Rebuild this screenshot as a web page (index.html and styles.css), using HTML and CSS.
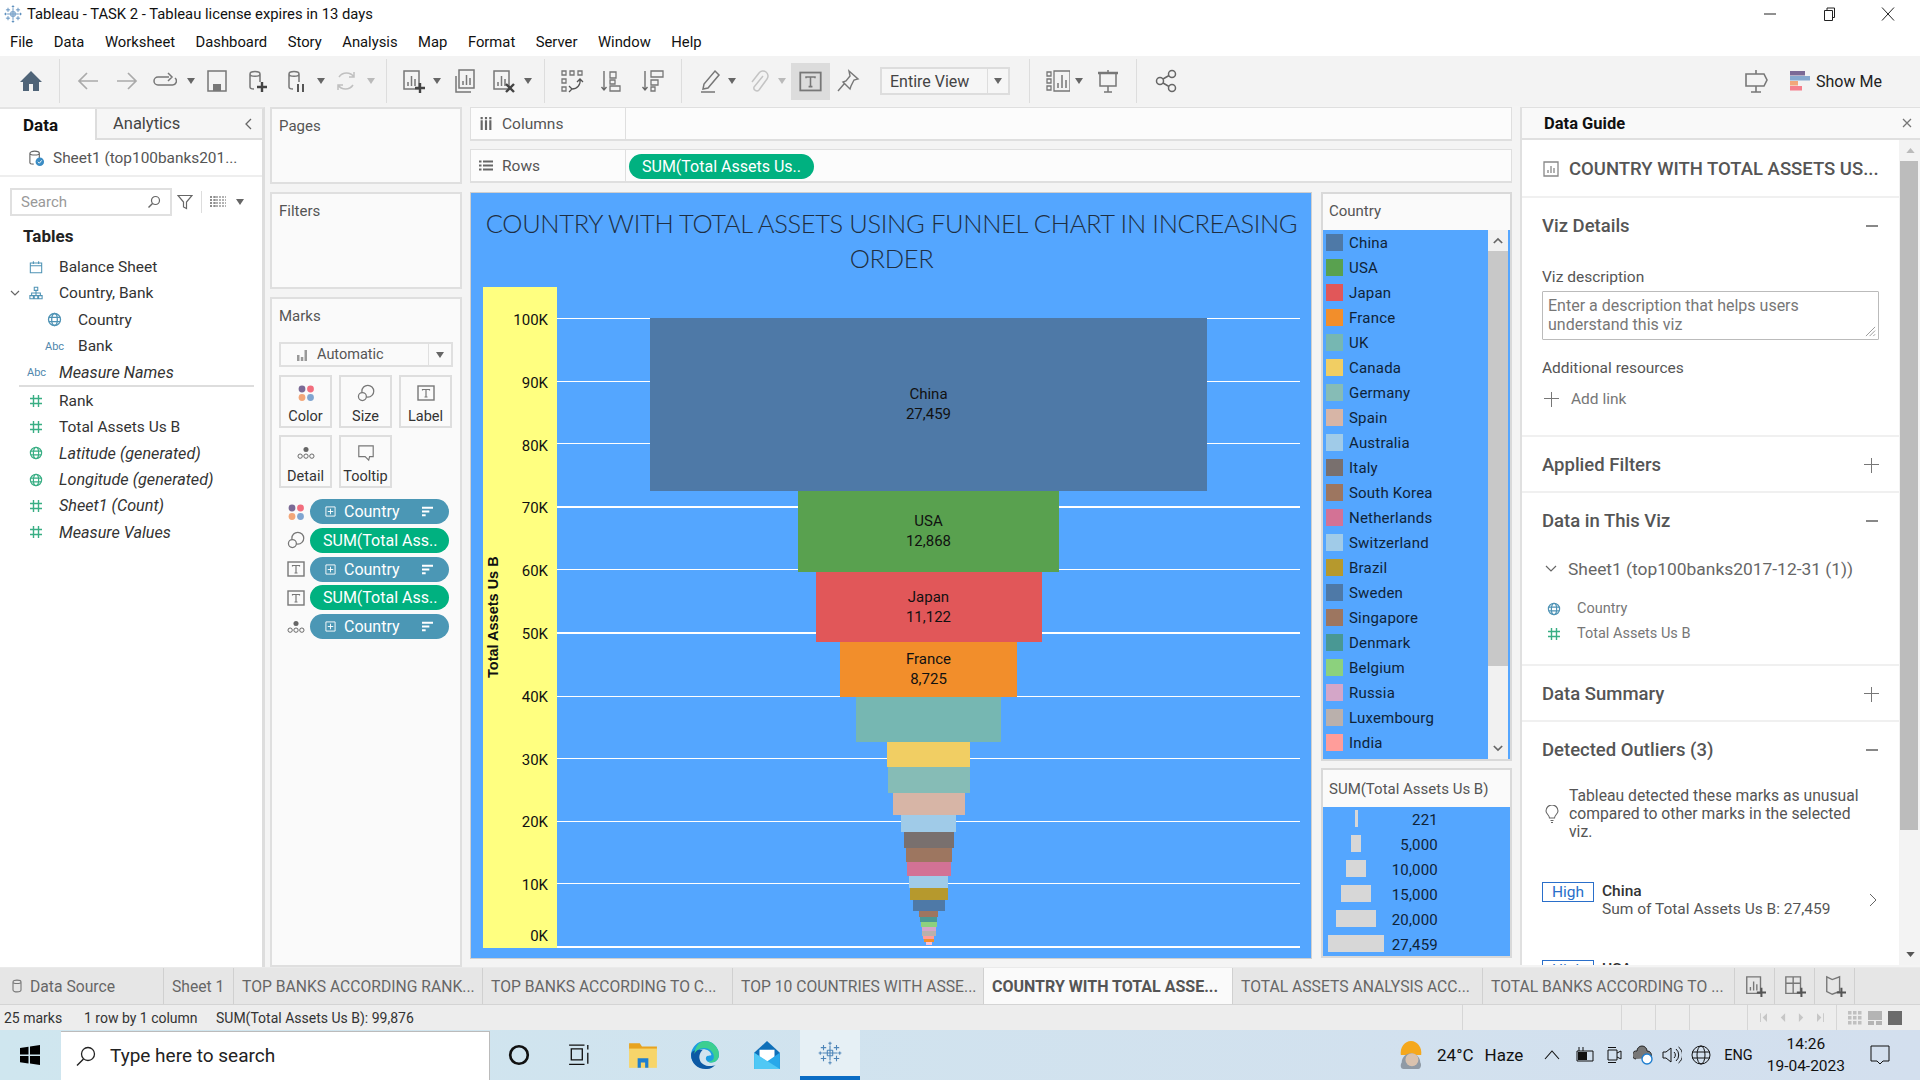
FILE: index.html
```html
<!DOCTYPE html>
<html lang="en">
<head>
  <meta charset="UTF-8">
  <title>Tableau - TASK 2</title>
  <link rel="stylesheet" href="styles.css">
</head>
<body>
  <svg class="defs">
    <symbol id="i-hash" viewBox="0 0 14 14"><path d="M4.5 1v12M9.5 1v12M1 4.5h12M1 9.5h12" fill="none" stroke="currentColor" stroke-width="1.4"/></symbol>
    <symbol id="i-globe" viewBox="0 0 16 16"><g fill="none" stroke="currentColor" stroke-width="1.4"><circle cx="8" cy="8" r="6.4"/><ellipse cx="8" cy="8" rx="3" ry="6.4"/><path d="M2 5.8h12M2 10.2h12"/></g></symbol>
    <symbol id="i-dots" viewBox="0 0 18 18"><circle cx="5" cy="5" r="3.4" fill="#7b6a96"/><circle cx="13.5" cy="5" r="3.4" fill="#f26d7d"/><circle cx="5" cy="13.5" r="3.4" fill="#f2a679"/><circle cx="13.5" cy="13.5" r="3.4" fill="#7fa5d1"/></symbol>
    <symbol id="i-size" viewBox="0 0 20 20"><g fill="none" stroke="#777" stroke-width="1.4"><circle cx="12" cy="8" r="6.6"/><circle cx="6" cy="14" r="4.4" fill="#fafafa"/></g></symbol>
    <symbol id="i-tbox" viewBox="0 0 18 18"><rect x="1" y="2" width="16" height="14" fill="none" stroke="#777" stroke-width="1.4"/><path d="M5.5 6.5v-1h7v1M9 5.5v7.5M7.5 13h3" fill="none" stroke="#777" stroke-width="1.2"/></symbol>
    <symbol id="i-detail" viewBox="0 0 20 16"><circle cx="10" cy="4" r="2.8" fill="#666"/><g fill="none" stroke="#666" stroke-width="1.1"><circle cx="3.5" cy="11.5" r="2.4"/><circle cx="10" cy="11.5" r="2.4"/><circle cx="16.5" cy="11.5" r="2.4"/></g></symbol>
    <symbol id="i-sort" viewBox="0 0 14 12"><path d="M1 2h12M1 6h8M1 10h4" stroke="#fff" stroke-width="2.2" fill="none"/></symbol>
    <symbol id="i-plusbox" viewBox="0 0 12 12"><path d="M1 1h10v10H1zM6 3v6M3 6h6" fill="none" stroke="#fff" stroke-width="1"/></symbol>
    <symbol id="i-caret" viewBox="0 0 8 6"><path d="M0 0h8L4 6z" fill="#666"/></symbol>
    <symbol id="i-cyl" viewBox="0 0 24 24"><g fill="none" stroke="#777" stroke-width="1.5"><path d="M6 5c0-3.2 10-3.2 10 0v8M6 5c0 3 10 3 10 0M6 5v13c0 1 1 2 4 2"/></g></symbol>
    <symbol id="i-sheet" viewBox="0 0 24 24"><g fill="none" stroke="#777" stroke-width="1.5"><path d="M3 2h15v18H3z"/><path d="M7 17v-4M10.500 17V7M14 17v-7"/></g></symbol>
    <symbol id="i-tableau" viewBox="0 0 24 24"><path d="M12 5v14M5 12h14M9.500 9.500h5M9.500 14.500h5M9.500 9.500v5M14.500 9.500v5M6 4.500v5M3.500 7h5M18 4.500v5M15.500 7h5M6 14.500v5M3.500 17h5M18 14.500v5M15.500 17h5M12 1.500v3M10.500 3h3M12 19.500v3M10.500 21h3M3 10.500v3M1.500 12h3M21 10.500v3M19.500 12h3" fill="none" stroke="#4f86b8" stroke-width="1"/></symbol>
  </svg>

  <header class="titlebar">
    <svg class="app-logo"><use href="#i-tableau"/></svg>
    <span class="title-text">Tableau - TASK 2 - Tableau license expires in 13 days</span>
    <div class="win-btns">
      <svg viewBox="0 0 14 14"><path d="M1 7h12" stroke="#222"/></svg>
      <svg viewBox="0 0 14 14"><path d="M2.500 3.500h8v10h-8zM5 3.500V1h7.500v9.500h-2" fill="none" stroke="#222"/></svg>
      <svg viewBox="0 0 14 14"><path d="M1 .5l12 13M13 .5l-12 13" stroke="#222" fill="none"/></svg>
    </div>
  </header>

  <nav class="menubar">
    <span>File</span><span>Data</span><span>Worksheet</span><span>Dashboard</span><span>Story</span><span>Analysis</span><span>Map</span><span>Format</span><span>Server</span><span>Window</span><span>Help</span>
  </nav>

  <div class="toolbar">
    <svg class="ico" viewBox="0 0 24 24"><path d="M12 2L23 13h-3v9h-6v-7h-4v7H4v-9H1z" fill="#4f6478"/></svg>
    <i class="tb-sep"></i>
    <svg class="ico" viewBox="0 0 24 24"><path d="M22 12H3M11 4l-8 8 8 8" fill="none" stroke="#aaa" stroke-width="1.7"/></svg>
    <svg class="ico" viewBox="0 0 24 24"><path d="M2 12h19M13 4l8 8-8 8" fill="none" stroke="#aaa" stroke-width="1.7"/></svg>
    <svg class="ico" viewBox="0 0 24 24"><path d="M16 8H5a4 4 0 0 0 0 8h14a4 4 0 0 0 3-7M15 4l4 4-4 4" fill="none" stroke="#777" stroke-width="1.5"/></svg>
    <svg class="car"><use href="#i-caret"/></svg>
    <svg class="ico" viewBox="0 0 24 24"><path d="M3 2h18v20H3z" fill="none" stroke="#777" stroke-width="1.5"/><path d="M8 22v-7h8v7z" fill="#777"/></svg>
    <svg class="ico" viewBox="0 0 24 24"><use href="#i-cyl"/><path d="M18 13v10M13 18h10" stroke="#444" stroke-width="2.4"/></svg>
    <svg class="ico" viewBox="0 0 24 24"><use href="#i-cyl"/><path d="M15 15v8M20 15v8" stroke="#555" stroke-width="2"/></svg>
    <svg class="car"><use href="#i-caret"/></svg>
    <svg class="ico" viewBox="0 0 24 24"><path d="M5 8a9 9 0 0 1 15 0M19 16a9 9 0 0 1-15 0M20 3v5h-5M4 21v-5h5" fill="none" stroke="#c0c0c0" stroke-width="1.5"/></svg>
    <svg class="car light"><use href="#i-caret"/></svg>
    <i class="tb-sep"></i>
    <svg class="ico" viewBox="0 0 24 24"><use href="#i-sheet"/><path d="M19 14v10M14 19h10" stroke="#444" stroke-width="2.4"/></svg>
    <svg class="car"><use href="#i-caret"/></svg>
    <svg class="ico" viewBox="0 0 24 24"><use href="#i-sheet" x="3" y="-1"/><path d="M3 7v16h15" fill="none" stroke="#777" stroke-width="1.500"/></svg>
    <svg class="ico" viewBox="0 0 24 24"><use href="#i-sheet"/><path d="M15 15l8 8M23 15l-8 8" stroke="#444" stroke-width="2.400"/></svg>
    <svg class="car"><use href="#i-caret"/></svg>
    <i class="tb-sep"></i>
    <svg class="ico" viewBox="0 0 24 24"><path d="M2 2h4v4H2zM10 2h4v4h-4zM18 2h4v4h-4zM2 10h4v4H2zM2 18h4v4H2z" fill="none" stroke="#777" stroke-width="1.300"/><path d="M20 10c1 6-3 10-8 10M9 17l3 3-3 3M17 13l3-3 3 3" fill="none" stroke="#555" stroke-width="1.300"/></svg>
    <svg class="ico" viewBox="0 0 24 24"><path d="M4 2v19M1.500 18l2.500 3 2.500-3" fill="none" stroke="#666" stroke-width="1.300"/><path d="M10 3h6v6h-6zM10 11h5v4h-5zM10 17h10v5H10z" fill="none" stroke="#777" stroke-width="1.300"/></svg>
    <svg class="ico" viewBox="0 0 24 24"><path d="M4 2v19M1.500 18l2.500 3 2.500-3" fill="none" stroke="#666" stroke-width="1.300"/><path d="M10 2h12v6H10zM10 11h7v5h-7zM10 18h4v4h-4z" fill="none" stroke="#777" stroke-width="1.300"/></svg>
    <i class="tb-sep"></i>
    <svg class="ico" viewBox="0 0 24 24"><path d="M17 2l4 4-11 13-5 1 1-5zM3 23h14" fill="none" stroke="#777" stroke-width="1.500"/></svg>
    <svg class="car"><use href="#i-caret"/></svg>
    <svg class="ico" viewBox="0 0 24 24"><path d="M17 7l-9 11a3 3 0 0 0 5 3l8-11a5 5 0 0 0-8-6l-7 9" fill="none" stroke="#c4c4c4" stroke-width="1.500"/></svg>
    <svg class="car light"><use href="#i-caret"/></svg>
    <div class="tb-active"><svg class="ico" viewBox="0 0 18 18"><use href="#i-tbox"/></svg></div>
    <svg class="ico" viewBox="0 0 24 24"><path d="M13 2l9 8-4 1-3 6-1 3-7-7 3-1 4-5zM8 15l-6 7" fill="none" stroke="#777" stroke-width="1.400"/></svg>
    <div class="combo"><span>Entire View</span><b><svg class="car"><use href="#i-caret"/></svg></b></div>
    <i class="tb-sep"></i>
    <svg class="ico" viewBox="0 0 24 24"><path d="M1 3h4v4H1zM1 10h4v4H1zM1 17h4v4H1zM8 2h16v20H8z" fill="none" stroke="#777" stroke-width="1.300"/><path d="M12 19v-5M16 19V6M20 19v-8" stroke="#777" stroke-width="1.500"/></svg>
    <svg class="car"><use href="#i-caret"/></svg>
    <svg class="ico" viewBox="0 0 24 24"><path d="M2 4h20" stroke="#777" stroke-width="2.500"/><path d="M4 4v13h16V4M12 1v3M12 17v6M8 23h8" fill="none" stroke="#777" stroke-width="1.500"/></svg>
    <i class="tb-sep"></i>
    <svg class="ico" viewBox="0 0 24 24"><g fill="none" stroke="#666" stroke-width="1.500"><circle cx="6" cy="12" r="3.500"/><circle cx="18" cy="5" r="3.500"/><circle cx="18" cy="19" r="3.500"/><path d="M9 10l6-3.500M9 14l6 3.500"/></g></svg>
    <svg class="ico" viewBox="0 0 24 24"><path d="M12 1v4M12 17v6M7 23h10M2 5h18l3 6-3 6H2z" fill="none" stroke="#777" stroke-width="1.600"/></svg>
    <div class="showme">
      <svg viewBox="0 0 20 20"><rect width="15" height="4.500" fill="#7b6a96"/><rect y="5" width="20" height="4.500" fill="#86a9cf"/><rect y="10" width="8" height="4.500" fill="#f2a679"/><rect y="15" width="12" height="4.500" fill="#f57f8c"/></svg>
      <span>Show Me</span>
    </div>
  </div>

  <main class="workspace">
    <aside class="datapane">
      <div class="pane-tabs">
        <div class="pane-tab active">Data</div>
        <div class="pane-tab">Analytics
          <svg viewBox="0 0 8 12"><path d="M7 1L2 6l5 5" fill="none" stroke="#666" stroke-width="1.300"/></svg>
        </div>
      </div>
      <div class="source-row">
        <svg viewBox="0 0 18 18"><path d="M2 4c0-3 10-3 10 0v5M2 4c0 2.500 10 2.500 10 0M2 4v10c0 1 1 1.500 4 1.500" fill="none" stroke="#666" stroke-width="1.200"/><circle cx="12.500" cy="13" r="4.500" fill="#3b8cc4"/><path d="M10.500 13l1.500 1.500 2.500-3" fill="none" stroke="#fff"/></svg>
        <span>Sheet1 (top100banks201...</span>
      </div>
      <div class="search-row">
        <div class="search-box"><span>Search</span>
          <svg viewBox="0 0 14 14"><circle cx="8.500" cy="5.500" r="4" fill="none" stroke="#666" stroke-width="1.200"/><path d="M5.500 8.500L1.500 12.500" stroke="#666" stroke-width="1.400"/></svg>
        </div>
        <svg class="filter-ico" viewBox="0 0 16 16"><path d="M1 1.500h14L9.500 8v6.500l-3-1.500V8z" fill="none" stroke="#666" stroke-width="1.200"/></svg>
        <i class="search-sep"></i>
        <svg class="grid-ico" viewBox="0 0 16 12"><path d="M0 1h16M0 4h16M0 7h16M0 10h16M1 0v11M5 0v11" stroke="#666" stroke-dasharray="2 1" fill="none"/></svg>
        <svg class="car"><use href="#i-caret"/></svg>
      </div>
      <div class="tables-head">Tables</div>
      <ul class="fields">
        <li class="lvl0"><svg class="fi blue" viewBox="0 0 16 16"><path d="M1.500 3.500h13v11h-13zM1.500 6.500h13M5 1.500v3M11 1.500v3" fill="none" stroke="currentColor" stroke-width="1.200"/></svg><span>Balance Sheet</span></li>
        <li class="lvl0"><svg class="twisty" viewBox="0 0 10 6"><path d="M1 1l4 4 4-4" fill="none" stroke="#666" stroke-width="1.200"/></svg><svg class="fi blue" viewBox="0 0 16 16"><path d="M6 1.500h4v3.500H6zM1 11h4v3.500H1zM6 11h4v3.500H6zM11 11h4v3.500h-4zM8 5v6M3 11V8h10v3" fill="none" stroke="currentColor" stroke-width="1.200"/></svg><span>Country, Bank</span></li>
        <li class="lvl1"><svg class="fi blue"><use href="#i-globe"/></svg><span>Country</span></li>
        <li class="lvl1"><em class="abc">Abc</em><span>Bank</span></li>
        <li class="lvl0 calc"><em class="abc">Abc</em><span>Measure Names</span></li>
        <li class="divider"></li>
        <li class="lvl0"><svg class="fi green"><use href="#i-hash"/></svg><span>Rank</span></li>
        <li class="lvl0"><svg class="fi green"><use href="#i-hash"/></svg><span>Total Assets Us B</span></li>
        <li class="lvl0 calc"><svg class="fi green"><use href="#i-globe"/></svg><span>Latitude (generated)</span></li>
        <li class="lvl0 calc"><svg class="fi green"><use href="#i-globe"/></svg><span>Longitude (generated)</span></li>
        <li class="lvl0 calc"><svg class="fi green"><use href="#i-hash"/></svg><span>Sheet1 (Count)</span></li>
        <li class="lvl0 calc"><svg class="fi green"><use href="#i-hash"/></svg><span>Measure Values</span></li>
      </ul>
    </aside>

    <section class="cards">
      <div class="card pages"><h4>Pages</h4></div>
      <div class="card filters"><h4>Filters</h4></div>
      <div class="card marks">
        <h4>Marks</h4>
        <div class="mark-type">
          <svg viewBox="0 0 12 12"><path d="M1 12V6h2.500v6zM4.800 12V8h2.500v4zM8.500 12V1H11v11z" fill="#999"/></svg>
          <span>Automatic</span>
          <b><svg class="car"><use href="#i-caret"/></svg></b>
        </div>
        <div class="mark-btns">
          <div class="mark-btn"><svg class="mb-ico"><use href="#i-dots"/></svg>Color</div>
          <div class="mark-btn"><svg class="mb-ico"><use href="#i-size"/></svg>Size</div>
          <div class="mark-btn"><svg class="mb-ico"><use href="#i-tbox"/></svg>Label</div>
          <div class="mark-btn"><svg class="mb-ico"><use href="#i-detail"/></svg>Detail</div>
          <div class="mark-btn"><svg class="mb-ico" viewBox="0 0 20 20"><path d="M2 2h16v12h-4l-1 4-4-4H2z" fill="none" stroke="#777" stroke-width="1.300"/></svg>Tooltip</div>
        </div>
        <div class="mark-pills">
          <div class="pill-row"><svg><use href="#i-dots"/></svg><div class="pill dim"><svg class="pb"><use href="#i-plusbox"/></svg>Country<svg class="ps"><use href="#i-sort"/></svg></div></div>
          <div class="pill-row"><svg><use href="#i-size"/></svg><div class="pill meas">SUM(Total Ass..</div></div>
          <div class="pill-row"><svg><use href="#i-tbox"/></svg><div class="pill dim"><svg class="pb"><use href="#i-plusbox"/></svg>Country<svg class="ps"><use href="#i-sort"/></svg></div></div>
          <div class="pill-row"><svg><use href="#i-tbox"/></svg><div class="pill meas">SUM(Total Ass..</div></div>
          <div class="pill-row"><svg><use href="#i-detail"/></svg><div class="pill dim"><svg class="pb"><use href="#i-plusbox"/></svg>Country<svg class="ps"><use href="#i-sort"/></svg></div></div>
        </div>
      </div>
    </section>

    <section class="center">
      <div class="shelf">
        <div class="shelf-label"><svg viewBox="0 0 12 12"><path d="M1 3h2v9H1zM5 3h2v9H5zM9 3h2v9H9zM1 0h2v2H1zM5 0h2v2H5zM9 0h2v2H9z" fill="#666"/></svg>Columns</div>
      </div>
      <div class="shelf">
        <div class="shelf-label"><svg viewBox="0 0 14 12"><path d="M0 1h2.500v2H0zM4 1h10v2H4zM0 5h2.500v2H0zM4 5h10v2H4zM0 9h2.500v2H0zM4 9h10v2H4z" fill="#666"/></svg>Rows</div>
        <div class="pill meas rows-pill">SUM(Total Assets Us..</div>
      </div>
      <div class="view-row">
        <div class="viz">
          <h1 class="viz-title">COUNTRY WITH TOTAL ASSETS USING FUNNEL CHART IN INCREASING ORDER</h1>
          <div class="chart">
            <div class="y-axis">
              <div class="y-title">Total Assets Us B</div>
              <div class="y-ticks">
                <span>100K</span><span>90K</span><span>80K</span><span>70K</span><span>60K</span><span>50K</span><span>40K</span><span>30K</span><span>20K</span><span>10K</span><span>0K</span>
              </div>
            </div>
            <div class="plot">
              <div class="grid">
                <i></i><i></i><i></i><i class="thick"></i><i></i><i class="thick"></i><i></i><i></i><i></i><i></i><i class="thick"></i>
              </div>
              <div class="funnel">
                <div class="bar c-china" style="width:557px;height:173px">China<br>27,459</div>
                <div class="bar c-usa" style="width:261px;height:81px">USA<br>12,868</div>
                <div class="bar c-japan" style="width:226px;height:70px">Japan<br>11,122</div>
                <div class="bar c-france" style="width:177px;height:55px">France<br>8,725</div>
                <div class="bar c-uk" style="width:145px;height:45px"></div>
                <div class="bar c-canada" style="width:83px;height:25px"></div>
                <div class="bar c-germany" style="width:82px;height:26px"></div>
                <div class="bar c-spain" style="width:72px;height:22px"></div>
                <div class="bar c-australia" style="width:55px;height:17px"></div>
                <div class="bar c-italy" style="width:50px;height:16px"></div>
                <div class="bar c-korea" style="width:46px;height:14px"></div>
                <div class="bar c-nl" style="width:44px;height:14px"></div>
                <div class="bar c-swiss" style="width:39px;height:12px"></div>
                <div class="bar c-brazil" style="width:38px;height:12px"></div>
                <div class="bar c-sweden" style="width:32px;height:11px"></div>
                <div class="bar c-singapore" style="width:19px;height:6px"></div>
                <div class="bar c-denmark" style="width:17px;height:5px"></div>
                <div class="bar c-belgium" style="width:16px;height:5px"></div>
                <div class="bar c-russia" style="width:14px;height:4px"></div>
                <div class="bar c-lux" style="width:14px;height:5px"></div>
                <div class="bar c-india" style="width:11px;height:3px"></div>
                <div class="bar c-orange" style="width:10px;height:3px"></div>
                <div class="bar c-pink" style="width:6px;height:3px"></div>
              </div>
            </div>
          </div>
        </div>

        <div class="legends">
          <div class="legend color-legend">
            <div class="legend-head">Country</div>
            <div class="legend-body">
              <ul class="legend-list">
                <li><i class="c-china"></i>China</li>
                <li><i class="c-usa"></i>USA</li>
                <li><i class="c-japan"></i>Japan</li>
                <li><i class="c-france"></i>France</li>
                <li><i class="c-uk"></i>UK</li>
                <li><i class="c-canada"></i>Canada</li>
                <li><i class="c-germany"></i>Germany</li>
                <li><i class="c-spain"></i>Spain</li>
                <li><i class="c-australia"></i>Australia</li>
                <li><i class="c-italy"></i>Italy</li>
                <li><i class="c-korea"></i>South Korea</li>
                <li><i class="c-nl"></i>Netherlands</li>
                <li><i class="c-swiss"></i>Switzerland</li>
                <li><i class="c-brazil"></i>Brazil</li>
                <li><i class="c-sweden"></i>Sweden</li>
                <li><i class="c-singapore"></i>Singapore</li>
                <li><i class="c-denmark"></i>Denmark</li>
                <li><i class="c-belgium"></i>Belgium</li>
                <li><i class="c-russia"></i>Russia</li>
                <li><i class="c-lux"></i>Luxembourg</li>
                <li><i class="c-india"></i>India</li>
                <li><i class="c-orange"></i></li>
              </ul>
              <div class="legend-scroll">
                <b class="arrow"><svg viewBox="0 0 12 8"><path d="M1 7l5-5 5 5" fill="none" stroke="#666" stroke-width="2"/></svg></b>
                <div class="thumb"></div>
                <b class="arrow bottom"><svg viewBox="0 0 12 8"><path d="M1 1l5 5 5-5" fill="none" stroke="#666" stroke-width="2"/></svg></b>
              </div>
            </div>
          </div>
          <div class="legend size-legend">
            <div class="legend-head">SUM(Total Assets Us B)</div>
            <ul class="size-list">
              <li><span class="size-cell"><i style="width:3px"></i></span><span class="size-val">221</span></li>
              <li><span class="size-cell"><i style="width:10px"></i></span><span class="size-val">5,000</span></li>
              <li><span class="size-cell"><i style="width:20px"></i></span><span class="size-val">10,000</span></li>
              <li><span class="size-cell"><i style="width:30px"></i></span><span class="size-val">15,000</span></li>
              <li><span class="size-cell"><i style="width:40px"></i></span><span class="size-val">20,000</span></li>
              <li><span class="size-cell"><i style="width:56px"></i></span><span class="size-val">27,459</span></li>
            </ul>
          </div>
        </div>
      </div>
    </section>

    <aside class="guide">
      <div class="guide-head">Data Guide
        <svg viewBox="0 0 10 10"><path d="M1 1l8 8M9 1l-8 8" stroke="#777" stroke-width="1.300"/></svg>
      </div>
      <div class="guide-body">
        <div class="guide-main">
          <div class="guide-sheet">
            <svg viewBox="0 0 16 16"><path d="M1 1h14v14H1z" fill="none" stroke="#888" stroke-width="1.300"/><path d="M5 12V9M8 12V5M11 12V7" stroke="#888" stroke-width="1.300"/></svg>
            <span>COUNTRY WITH TOTAL ASSETS US...</span>
          </div>
          <section class="g-sec viz-details">
            <div class="g-head">Viz Details<i class="minus"></i></div>
            <div class="g-label">Viz description</div>
            <div class="g-area">Enter a description that helps users understand this viz
              <svg viewBox="0 0 12 12"><path d="M1 11L11 1M5 11l6-6M9 11l2-2" stroke="#777" stroke-width=".8"/></svg>
            </div>
            <div class="g-label res">Additional resources</div>
            <div class="g-add"><i class="plus"></i>Add link</div>
          </section>
          <section class="g-sec"><div class="g-head">Applied Filters<i class="plus"></i></div></section>
          <section class="g-sec in-viz">
            <div class="g-head">Data in This Viz<i class="minus"></i></div>
            <div class="g-source"><svg viewBox="0 0 12 8"><path d="M1 1l5 5 5-5" fill="none" stroke="#666" stroke-width="1.200"/></svg>Sheet1 (top100banks2017-12-31 (1))</div>
            <div class="g-field"><svg class="fi blue"><use href="#i-globe"/></svg>Country</div>
            <div class="g-field"><svg class="fi green"><use href="#i-hash"/></svg>Total Assets Us B</div>
          </section>
          <section class="g-sec"><div class="g-head">Data Summary<i class="plus"></i></div></section>
          <section class="g-sec outliers">
            <div class="g-head">Detected Outliers (3)<i class="minus"></i></div>
            <div class="g-note">
              <svg viewBox="0 0 14 18"><path d="M4.500 13c0-3-3.500-4-3.500-7a6 6 0 0 1 12 0c0 3-3.500 4-3.500 7zM5.500 15.500h3M6 17.500h2" fill="none" stroke="#666" stroke-width="1.100"/></svg>
              <p>Tableau detected these marks as unusual compared to other marks in the selected viz.</p>
            </div>
            <div class="outlier">
              <span class="high">High</span>
              <div><b>China</b><br>Sum of Total Assets Us B: 27,459</div>
              <svg viewBox="0 0 8 14"><path d="M1 1l6 6-6 6" fill="none" stroke="#666" stroke-width="1"/></svg>
            </div>
            <div class="outlier next">
              <span class="high">High</span>
              <div><b>USA</b></div>
            </div>
          </section>
        </div>
        <div class="guide-scroll">
          <b><svg viewBox="0 0 10 6"><path d="M0 6l5-6 5 6z" fill="#bbb"/></svg></b>
          <div class="g-thumb"></div>
          <b class="down"><svg viewBox="0 0 10 6"><path d="M0 0l5 6 5-6z" fill="#555"/></svg></b>
        </div>
      </div>
    </aside>
  </main>

  <div class="tabbar">
    <div class="tab t-source"><svg viewBox="0 0 10 14"><path d="M1 3c0-2.500 8-2.500 8 0v8c0 2.500-8 2.500-8 0zM1 3c0 2 8 2 8 0" fill="none" stroke="#777" stroke-width="1.100"/></svg>Data Source</div>
    <div class="tab t-sheet">Sheet 1</div>
    <div class="tab t-249">TOP BANKS ACCORDING RANK...</div>
    <div class="tab t-250">TOP BANKS ACCORDING TO C...</div>
    <div class="tab t-251">TOP 10 COUNTRIES WITH ASSE...</div>
    <div class="tab t-249 active">COUNTRY WITH TOTAL ASSE...</div>
    <div class="tab t-250">TOTAL ASSETS ANALYSIS ACC...</div>
    <div class="tab t-252">TOTAL BANKS ACCORDING TO ...</div>
    <div class="tab t-ico"><svg viewBox="0 0 24 24"><use href="#i-sheet"/><path d="M19 14v10M14 19h10" stroke="#555" stroke-width="2.200"/></svg></div>
    <div class="tab t-ico"><svg viewBox="0 0 24 24"><path d="M2 2h16v18H2zM2 9h16M10 2v18" fill="none" stroke="#777" stroke-width="1.500"/><path d="M19 14v10M14 19h10" stroke="#555" stroke-width="2.200"/></svg></div>
    <div class="tab t-ico"><svg viewBox="0 0 24 24"><path d="M3 2l6 3 8-3v16l-8 3-6-3z" fill="none" stroke="#777" stroke-width="1.500"/><path d="M19 14v10M14 19h10" stroke="#555" stroke-width="2.200"/></svg></div>
  </div>

  <div class="statusbar">
    <span class="st st-marks">25 marks</span>
    <span class="st st-dim">1 row by 1 column</span>
    <span class="st st-sum">SUM(Total Assets Us B): 99,876</span>
    <div class="st-cells">
      <i class="w159"></i><i class="w34"></i><i class="w34"></i><i class="w58"></i>
      <div class="st-nav">
        <svg viewBox="0 0 8 10"><path d="M0 0h1v10H0zM8 0v10L3 5z" fill="#c6c6c6"/></svg>
        <svg viewBox="0 0 8 10"><path d="M7 0v10L2 5z" fill="#c6c6c6"/></svg>
        <svg viewBox="0 0 8 10"><path d="M1 0v10l5-5z" fill="#c6c6c6"/></svg>
        <svg viewBox="0 0 8 10"><path d="M8 0H7v10h1zM0 0v10l5-5z" fill="#c6c6c6"/></svg>
      </div>
      <div class="st-layout">
        <svg viewBox="0 0 14 14"><path d="M0 0h3.500v3.500H0zM5 0h3.500v3.500H5zM10 0h3.500v3.500H10zM0 5h3.500v3.500H0zM5 5h3.500v3.500H5zM10 5h3.500v3.500H10zM0 10h3.500v3.500H0zM5 10h3.500v3.500H5zM10 10h3.500v3.500H10z" fill="#c0c0c0"/></svg>
        <svg viewBox="0 0 14 14"><path d="M0 0h14v9H0zM0 10h6v4H0zM8 10h6v4H8z" fill="#b4b4b4"/></svg>
        <svg viewBox="0 0 14 14"><path d="M0 0h14v14H0z" fill="#6b6b6b"/></svg>
      </div>
    </div>
  </div>

  <footer class="taskbar">
    <div class="start"><svg viewBox="0 0 20 20"><path d="M0 3l8.500-1.300v7.800H0zM10 1.400L20 0v9.500H10zM0 11h8.500v7.600L0 17.300zM10 11h10v9l-10-1.400z" fill="#000"/></svg></div>
    <div class="task-search">
      <svg viewBox="0 0 20 20"><circle cx="12" cy="8" r="6.500" fill="none" stroke="#222" stroke-width="1.300"/><path d="M7.500 13L1 19.500" stroke="#222" stroke-width="1.400"/></svg>
      <span>Type here to search</span>
    </div>
    <div class="task-apps">
      <div class="task-app"><svg viewBox="0 0 20 20"><circle cx="10" cy="10" r="8" fill="none" stroke="#111" stroke-width="2.400"/></svg></div>
      <div class="task-app"><svg viewBox="0 0 20 20"><path d="M3 4.500h10v10H3zM1 1h14M1 18.500h14M18 1v4M18 8v10" fill="none" stroke="#111" stroke-width="1.200"/></svg></div>
      <div class="task-app big"><svg viewBox="0 0 28 28"><path d="M1 3h10l2 3h14v4H1z" fill="#e8a31e"/><path d="M1 8h26v18H1z" fill="#f7d56a"/><path d="M9 26v-9h10v9h-3v-5h-4v5z" fill="#1f7fd0"/></svg></div>
      <div class="task-app big"><svg viewBox="0 0 28 28"><path d="M14 1a13 13 0 0 1 13 13c0 4-3 7-7 7-3 0-6-2-5-5 1-2 4-1 5-2-1-5-8-7-12-4C5 13 4 19 8 24 3 22 1 18 1 14A13 13 0 0 1 14 1z" fill="#1b9de2"/><path d="M1 14c0 8 7 14 15 13 3 0 6-2 8-4-5 3-14 1-15-5-1-4 1-7 3-9-6 0-11 0-11 5z" fill="#0c59a4"/><path d="M14 1a13 13 0 0 1 13 13c0 4-3 7-7 7-1 0-2 0-3-1 4 0 6-2 5-6-1-5-7-8-12-6-3 1-5 3-6 5C5 6 9 1 14 1z" fill="#3ccf91"/></svg></div>
      <div class="task-app big"><svg viewBox="0 0 28 28"><path d="M14 1l12 11v15H2V12z" fill="#0f6fb8"/><path d="M7 9h14v9l-7 5-7-5z" fill="#fff"/><path d="M2 12l12 8 12-8v15H2z" fill="#28a8ea"/><path d="M2 12l24 15H2z" fill="#50c8f5"/></svg></div>
      <div class="task-app tableau"><svg viewBox="0 0 24 24"><use href="#i-tableau"/></svg></div>
    </div>
    <div class="tray">
      <svg class="weather" viewBox="0 0 28 32"><path d="M3 16C2 8 7 1 14 1s12 7 11 15z" fill="#f5a81c"/><path d="M4 24c0-6 5-10 10-10s10 4 10 10c2 3 0 7-2 7H6c-3 0-4-4-2-7z" fill="#8f9aa5"/><circle cx="15" cy="21" r="7" fill="#d9c2ae"/></svg>
      <span class="temp">24°C</span><span class="haze">Haze</span>
      <svg class="tray-ico chev" viewBox="0 0 16 10"><path d="M1 9l7-8 7 8" fill="none" stroke="#111" stroke-width="1.100"/></svg>
      <svg class="tray-ico" viewBox="0 0 20 20"><path d="M2 6h16v10H2z" fill="none" stroke="#111"/><path d="M3 7h9v8H3z" fill="#111"/><path d="M4 2v4M8 2v4" stroke="#111"/></svg>
      <svg class="tray-ico" viewBox="0 0 20 20"><path d="M4 5h9v10H4zM13 8l4-2v8l-4-2M4 2.500h8M4 17.500h8" fill="none" stroke="#111"/></svg>
      <svg class="tray-ico" viewBox="0 0 20 20"><path d="M3 14a4 4 0 0 1 1-8 5 5 0 0 1 10 0 4 4 0 0 1 3 7" fill="#777" stroke="#222"/><circle cx="14" cy="14" r="5" fill="#fff" stroke="#1e7ed0" stroke-width="1.400"/></svg>
      <svg class="tray-ico" viewBox="0 0 20 20"><path d="M1 7h3l5-4v14l-5-4H1zM12 7a4 4 0 0 1 0 6M14 4a8 8 0 0 1 0 12M16.500 2a10 10 0 0 1 0 16" fill="none" stroke="#111"/></svg>
      <svg class="tray-ico" viewBox="0 0 20 20"><g fill="none" stroke="#111"><circle cx="10" cy="10" r="9"/><ellipse cx="10" cy="10" rx="4" ry="9"/><path d="M1 7h18M1 13h18"/></g></svg>
      <span class="lang">ENG</span>
      <div class="clock"><span>14:26</span><span>19-04-2023</span></div>
      <svg class="tray-ico notif" viewBox="0 0 20 20"><path d="M1 1h18v15h-6l-3 3-3-3H1z" fill="none" stroke="#111"/></svg>
    </div>
  </footer>
</body>
</html>
```

FILE: styles.css
```css
* {
  box-sizing: border-box;
}

html, body {
  margin: 0;
  width: 1920px;
  height: 1080px;
  overflow: hidden;
}

body {
  display: flex;
  flex-direction: column;
  background: #f4f4f4;
  color: #333;
  font-family: Roboto, "Noto Sans", sans-serif;
  font-size: 15px;
}

ul {
  list-style: none;
  margin: 0;
  padding: 0;
}

i, em {
  font-style: normal;
}

svg {
  display: block;
  flex: none;
}

.defs {
  display: none;
}

/* colours of the countries */
.c-china { background: #4e79a7; }
.c-usa { background: #59a14f; }
.c-japan { background: #e15759; }
.c-france { background: #f28e2b; }
.c-uk { background: #76b7b2; }
.c-canada { background: #f1ce63; }
.c-germany { background: #86bcb6; }
.c-spain { background: #d7b5a6; }
.c-australia { background: #a0cbe8; }
.c-italy { background: #79706e; }
.c-korea { background: #9d7660; }
.c-nl { background: #d37295; }
.c-swiss { background: #a0cbe8; }
.c-brazil { background: #b6992d; }
.c-sweden { background: #4e79a7; }
.c-singapore { background: #9d7660; }
.c-denmark { background: #499894; }
.c-belgium { background: #8cd17d; }
.c-russia { background: #d4a6c8; }
.c-lux { background: #bab0ac; }
.c-india { background: #ff9d9a; }
.c-orange { background: #f28e2b; }
.c-pink { background: #fabfd2; }

/* title and menu */
.titlebar {
  height: 28px;
  flex: none;
  display: flex;
  align-items: center;
  background: #fff;
  padding-left: 3px;
  color: #111;
}

.app-logo {
  width: 20px;
  height: 20px;
  margin-right: 4px;
}

.title-text {
  font-size: 14.8px;
}

.win-btns {
  margin-left: auto;
  display: flex;
  align-items: center;
  gap: 45px;
  padding-right: 25px;
}

.win-btns svg {
  width: 14px;
  height: 14px;
}

.menubar {
  height: 28px;
  flex: none;
  display: flex;
  align-items: center;
  gap: 20.5px;
  padding-left: 10px;
  background: #fff;
  color: #111;
  font-size: 14.8px;
}

/* toolbar: the tracks are the distances between the icons */
.toolbar {
  height: 50px;
  flex: none;
  display: grid;
  grid-template-columns: 40px 17px 39px 38px 34px 18px 39px 39px 34px 17px 33px 19px 15px 32px 20px 38px 33px 20px 16px 40px 41px 40px 17px 30px 18px 32px 13px 45px 44px 149px 17px 29px 21px 40px 18px 590px 46px auto;
  align-items: center;
  justify-items: start;
  padding-left: 19px;
  background: #f3f3f3;
}

.ico {
  width: 24px;
  height: 24px;
}

.car {
  width: 8px;
  height: 6px;
}

.car.light {
  opacity: .4;
}

.tb-sep {
  width: 1px;
  height: 44px;
  background: #ddd;
}

.tb-active {
  width: 39px;
  height: 37px;
  background: #dcdcdc;
  display: flex;
  align-items: center;
  justify-content: center;
}

.tb-active .ico {
  width: 23px;
  height: 23px;
}

.combo {
  width: 130px;
  height: 28px;
  display: flex;
  align-items: center;
  border: 2px solid #ddd;
  background: #f6f6f6;
  padding-left: 8px;
  font-size: 16px;
  color: #444;
}

.combo span {
  width: 97px;
}

.combo b {
  flex: 1;
  height: 100%;
  border-left: 1px solid #ddd;
  display: flex;
  align-items: center;
  justify-content: center;
}

.showme {
  display: flex;
  align-items: center;
  gap: 6px;
  color: #222;
  font-size: 16px;
}

.showme svg {
  width: 20px;
  height: 20px;
}

/* main area */
.workspace {
  height: 861px;
  flex: none;
  display: flex;
  padding-top: 1px;
}

.datapane {
  width: 265px;
  margin-right: 5px;
  background: #fff;
  border-right: 3px solid #ddd;
  border-top: 2px solid #e4e4e4;
}

.pane-tabs {
  display: flex;
  height: 31px;
}

.pane-tab {
  height: 100%;
  display: flex;
  align-items: center;
  font-size: 16.5px;
}

.pane-tab.active {
  width: 97px;
  padding-left: 23px;
  font-size: 17px;
  font-weight: 700;
  color: #111;
  border-right: 2px solid #ddd;
}

.pane-tab:not(.active) {
  flex: 1;
  padding-left: 16px;
  background: #f6f6f6;
  border-bottom: 2px solid #ddd;
  color: #444;
}

.pane-tab svg {
  width: 8px;
  height: 12px;
  margin-left: auto;
  margin-right: 10px;
}

.source-row {
  height: 37px;
  display: flex;
  align-items: center;
  padding-left: 28px;
  gap: 8px;
  border-bottom: 2px solid #eee;
  color: #555;
  font-size: 15.4px;
}

.source-row svg {
  width: 17px;
  height: 18px;
}

.search-row {
  display: flex;
  align-items: center;
  padding: 11px 0 0 10px;
}

.search-box {
  width: 162px;
  height: 28px;
  display: flex;
  align-items: center;
  justify-content: space-between;
  padding: 0 9px;
  border: 2px solid #e0e0e0;
  color: #999;
}

.search-box svg {
  width: 14px;
  height: 14px;
}

.filter-ico {
  width: 16px;
  height: 16px;
  margin-left: 5px;
}

.search-sep {
  width: 1px;
  height: 22px;
  background: #ddd;
  margin: 0 8px;
}

.grid-ico {
  width: 16px;
  height: 12px;
  margin-right: 10px;
}

.tables-head {
  padding: 10px 0 0 23px;
  height: 38px;
  font-size: 17px;
  font-weight: 700;
  color: #222;
}

.fields {
  color: #333;
  font-size: 15.5px;
}

.fields li {
  height: 26.3px;
  display: flex;
  align-items: center;
  position: relative;
}

.fields .lvl0 {
  padding-left: 59px;
}

.fields .lvl1 {
  padding-left: 78px;
}

.fields .calc {
  font-style: italic;
  font-size: 16.2px;
}

.fields .divider {
  height: 2px;
  margin: 0 8px 0 19px;
  background: #ddd;
}

.fi {
  position: absolute;
  width: 14px;
  height: 14px;
}

.lvl0 .fi {
  left: 29px;
}

.lvl1 .fi {
  left: 47px;
  width: 15px;
  height: 15px;
}

.blue {
  color: #4f93b5;
}

.green {
  color: #39ae84;
}

.abc {
  position: absolute;
  left: 27px;
  font-size: 11px;
  font-style: normal;
  color: #4f87ad;
}

.lvl1 .abc {
  left: 45px;
}

.twisty {
  position: absolute;
  left: 10px;
  width: 10px;
  height: 6px;
}

/* pages, filters and marks */
.cards {
  width: 192px;
  margin-right: 8px;
  display: flex;
  flex-direction: column;
  gap: 8px;
}

.card {
  background: #fafafa;
  border: 2px solid #dfdfdf;
  padding: 8px 7px 0;
  color: #555;
}

.card h4 {
  margin: 0;
  font-weight: 400;
  font-size: 15px;
}

.pages {
  height: 77px;
}

.filters {
  height: 97px;
}

.marks {
  flex: 1;
}

.mark-type {
  height: 25px;
  margin-top: 17px;
  display: flex;
  align-items: center;
  border: 2px solid #e0e0e0;
  padding-left: 15px;
  font-size: 14.5px;
}

.mark-type > svg:first-child {
  width: 12px;
  height: 12px;
  margin-right: 9px;
}

.mark-type span {
  flex: 1;
}

.mark-type b {
  width: 23px;
  height: 100%;
  display: flex;
  align-items: center;
  justify-content: center;
  border-left: 1px solid #e0e0e0;
}

.mark-btns {
  margin-top: 8px;
  display: grid;
  grid-template-columns: repeat(3, 53px);
  grid-auto-rows: 53px;
  gap: 7px;
}

.mark-btn {
  border: 2px solid #dedede;
  display: flex;
  flex-direction: column;
  align-items: center;
  padding-top: 7px;
  gap: 6px;
  color: #333;
  font-size: 14.5px;
}

.mb-ico {
  width: 18px;
  height: 18px;
}

.mark-pills {
  margin: 11px 0 0;
  padding-left: 8px;
  display: flex;
  flex-direction: column;
  gap: 3.75px;
}

.pill-row {
  display: flex;
  align-items: center;
  gap: 5px;
}

.pill-row > svg {
  width: 18px;
  height: 18px;
}

.pill {
  height: 25px;
  border-radius: 13px;
  display: flex;
  align-items: center;
  color: #fff;
  white-space: nowrap;
  font-size: 16px;
}

.pill-row .pill {
  width: 139px;
}

.dim {
  background: #4b97b5;
  padding-left: 15px;
}

.meas {
  background: #00b180;
  padding-left: 13px;
}

.pb {
  width: 11px;
  height: 11px;
  margin-right: 8px;
}

.ps {
  width: 13px;
  height: 11px;
  margin-left: auto;
  margin-right: 15px;
}

/* shelves */
.center {
  width: 1042px;
  margin-right: 8px;
  display: flex;
  flex-direction: column;
}

.shelf {
  height: 34px;
  flex: none;
  margin-bottom: 8px;
  display: flex;
  align-items: center;
  background: #fcfcfc;
  border-top: 1px solid #dfdfdf;
  border-bottom: 2px solid #dfdfdf;
  border-left: 1px solid #dfdfdf;
  border-right: 1px solid #dfdfdf;
  font-size: 15.5px;
}

.shelf-label {
  width: 155px;
  height: 100%;
  display: flex;
  align-items: center;
  gap: 9px;
  padding-left: 8px;
  border-right: 1px solid #dfdfdf;
  color: #555;
}

.shelf-label svg {
  width: 14px;
  height: 13px;
}

.rows-pill {
  width: 185px;
  margin: 2px 0 0 3px;
}

.view-row {
  display: flex;
  gap: 9px;
  height: 767px;
  margin-top: 1px;
}

/* the chart */
.viz {
  width: 842px;
  background: #54a6ff;
  border: 1px solid #cfcfcf;
  padding: 13px 11px 0 12px;
}

.viz-title {
  margin: 0 0 11px;
  height: 70px;
  text-align: center;
  font-family: Lato, Roboto, sans-serif;
  font-weight: 300;
  font-size: 25.5px;
  letter-spacing: -.35px;
  line-height: 35px;
  color: #1f2f42;
}

.chart {
  display: flex;
  height: 661px;
}

.y-axis {
  width: 74px;
  background: #ffff80;
  display: flex;
  color: #111;
}

.y-title {
  width: 20px;
  margin-left: 2px;
  writing-mode: vertical-rl;
  transform: rotate(180deg);
  text-align: center;
  font-family: "Liberation Sans", sans-serif;
  font-size: 14.5px;
  font-weight: 700;
  white-space: nowrap;
}

.y-ticks {
  flex: 1;
  padding: 33px 9px 0 0;
  display: flex;
  flex-direction: column;
  justify-content: space-between;
  align-items: flex-end;
}

.y-ticks span {
  height: 0;
  line-height: 0;
  font-size: 15px;
}

/* the 0K label sits above its line, at the edge of the pane */
.y-ticks span:last-child {
  transform: translateY(-12px);
}

.plot {
  flex: 1;
  position: relative;
}

.grid {
  position: absolute;
  inset: 31px 0 0 0;
  display: flex;
  flex-direction: column;
  justify-content: space-between;
}

.grid i {
  height: 1px;
  background: #fff;
}

.grid i.thick {
  height: 2px;
}

.funnel {
  position: relative;
  padding-top: 31px;
  display: flex;
  flex-direction: column;
  align-items: center;
}

.bar {
  text-align: center;
  font-size: 15px;
  line-height: 20px;
  color: #111;
}

.c-china.bar { padding-top: 66px; }
.c-usa.bar { padding-top: 20px; }
.c-japan.bar { padding-top: 15px; }
.c-france.bar { padding-top: 7px; }

/* legends */
.legends {
  width: 191px;
  display: flex;
  flex-direction: column;
  gap: 7px;
  font-size: 15px;
}

.legend {
  border: 2px solid #d9d9d9;
  background: #fafafa;
}

.color-legend {
  height: 569px;
}

.size-legend {
  height: 190px;
}

.legend-head {
  height: 36px;
  display: flex;
  align-items: center;
  padding: 0 0 2px 6px;
  color: #555;
}

.size-legend .legend-head {
  height: 37px;
  padding-bottom: 0;
}

.legend-body {
  height: 529px;
  display: flex;
  background: #54a6ff;
  padding-right: 2px;
  overflow: hidden;
}

.legend-list {
  flex: 1;
  padding: 4px 0 0 3px;
  color: #0f2338;
}

.legend-list li {
  height: 25px;
  display: flex;
  gap: 6px;
  letter-spacing: .2px;
}

.legend-list li i {
  width: 17px;
  height: 17px;
  flex: none;
}

.legend-scroll {
  width: 20px;
  margin-left: 1px;
  background: #f1f1f1;
  display: flex;
  flex-direction: column;
}

.legend-scroll .arrow {
  height: 21px;
  display: flex;
  align-items: center;
  justify-content: center;
}

.legend-scroll svg {
  width: 10px;
  height: 7px;
}

.legend-scroll .bottom {
  margin-top: auto;
}

.thumb {
  height: 415px;
  background: #c8c8c8;
}

.size-list {
  height: 149px;
  padding-top: 3px;
  background: #54a6ff;
  color: #0f2338;
}

.size-list li {
  height: 25px;
  display: flex;
  letter-spacing: .2px;
}

.size-cell {
  width: 66px;
  display: flex;
  justify-content: center;
}

.size-cell i {
  height: 17px;
  background: #d7d7d7;
}

.size-val {
  width: 49px;
  padding-top: 1px;
  text-align: right;
}

/* data guide */
.guide {
  width: 400px;
  display: flex;
  flex-direction: column;
  background: #fff;
  border-left: 2px solid #e0e0e0;
  height: 858px;
}

.guide-head {
  height: 33px;
  flex: none;
  display: flex;
  align-items: center;
  justify-content: space-between;
  padding: 0 8px 0 22px;
  background: #f9f9f9;
  border-top: 1px solid #e0e0e0;
  border-bottom: 2px solid #e0e0e0;
  font-weight: 700;
  font-size: 16.5px;
  color: #111;
}

.guide-head svg {
  width: 10px;
  height: 10px;
}

.guide-body {
  flex: 1;
  display: flex;
  min-height: 0;
}

.guide-main {
  flex: 1;
  overflow: hidden;
}

.guide-sheet {
  height: 58px;
  display: flex;
  align-items: center;
  gap: 10px;
  padding: 2px 0 0 21px;
  border-bottom: 2px solid #f0f0f0;
  font-size: 18.5px;
  font-weight: 500;
  color: #555;
}

.guide-sheet svg {
  width: 16px;
  height: 16px;
}

.g-sec {
  border-bottom: 2px solid #f0f0f0;
  height: 56px;
  padding: 0 20px;
}

.g-head {
  height: 56px;
  display: flex;
  align-items: center;
  justify-content: space-between;
  font-size: 18.5px;
  font-weight: 500;
  color: #555;
}

.minus {
  width: 12px;
  height: 1.500px;
  background: #888;
  margin-right: 1px;
}

.plus {
  position: relative;
  width: 15px;
  height: 15px;
  background: linear-gradient(#777, #777) center / 100% 1.200px no-repeat, linear-gradient(#777, #777) center / 1.200px 100% no-repeat;
}

.viz-details {
  height: 239px;
}

.g-label {
  margin-top: 14px;
  height: 20px;
  color: #555;
  font-size: 15.5px;
}

.g-label.res {
  margin-top: 19px;
}

.g-area {
  position: relative;
  height: 49px;
  margin-top: 3px;
  padding: 5px 30px 0 5px;
  border: 1px solid #bbb;
  border-radius: 1px;
  font-size: 16px;
  line-height: 18.5px;
  color: #777;
}

.g-area svg {
  position: absolute;
  right: 2px;
  bottom: 2px;
  width: 11px;
  height: 11px;
}

.g-add {
  margin-top: 10px;
  height: 20px;
  display: flex;
  align-items: center;
  gap: 12px;
  padding-left: 2px;
  color: #777;
  font-size: 15.5px;
}

.in-viz {
  height: 173px;
}

.g-source {
  margin-top: 7px;
  height: 26px;
  display: flex;
  align-items: center;
  gap: 11px;
  padding-left: 3px;
  font-size: 17.4px;
  color: #666;
}

.g-source svg {
  width: 12px;
  height: 8px;
}

.g-field {
  position: relative;
  height: 25px;
  display: flex;
  align-items: center;
  padding-left: 35px;
  color: #777;
  font-size: 14.500px;
}

.g-field .fi {
  left: 5px;
}

.g-field:first-of-type,
.g-source + .g-field {
  margin-top: 14px;
}

.outliers {
  height: auto;
  border: 0;
}

.g-note {
  margin-top: 9px;
  display: flex;
  align-items: center;
  gap: 10px;
  padding: 0 20px 0 3px;
}

.g-note svg {
  width: 14px;
  height: 18px;
}

.g-note p {
  margin: 0;
  line-height: 18px;
  font-size: 15.7px;
  color: #555;
}

.outlier {
  margin-top: 41px;
  display: flex;
  align-items: flex-start;
  gap: 8px;
  line-height: 18px;
  font-size: 15.5px;
  color: #555;
}

.outlier b {
  color: #333;
  font-weight: 500;
}

.outlier > svg {
  width: 8px;
  height: 14px;
  margin: 11px 2px 0 auto;
}

.high {
  width: 52px;
  height: 20px;
  border: 1px solid #2a6fca;
  text-align: center;
  font-size: 15.500px;
  line-height: 18px;
  color: #2a6fca;
  flex: none;
}

.outlier.next {
  margin-top: 42px;
}

.guide-scroll {
  width: 21px;
  background: #f3f3f3;
  padding-left: 1px;
  display: flex;
  flex-direction: column;
  height: 100%;
}

.guide-scroll b {
  height: 21px;
  display: flex;
  align-items: center;
  justify-content: center;
  flex: none;
}

.guide-scroll svg {
  width: 9px;
  height: 5px;
}

.g-thumb {
  height: 669px;
  background: #bcbcbc;
  margin-right: 2px;
}

.guide-scroll .down {
  margin-top: auto;
}

/* sheet tabs */
.tabbar {
  height: 38px;
  flex: none;
  display: flex;
  background: #e6e6e6;
  border-bottom: 1px solid #d4d4d4;
  border-top: 1px solid #eaeaea;
  color: #666;
  font-size: 15.7px;
}

.tab {
  height: 36px;
  display: flex;
  align-items: center;
  padding-left: 8px;
  border-right: 1px solid #d0d0d0;
  white-space: nowrap;
  overflow: hidden;
}

.tab.active {
  background: #fafafa;
  font-size: 16px;
  font-weight: 700;
  color: #555;
}

.t-source {
  width: 164px;
  padding-left: 12px;
  gap: 8px;
}

.t-source svg {
  width: 10px;
  height: 14px;
}

.t-sheet {
  width: 70px;
}

.t-249 {
  width: 249px;
}

.t-250 {
  width: 250px;
}

.t-251 {
  width: 251px;
}

.t-252 {
  width: 252px;
}

.t-ico {
  width: 40px;
  justify-content: center;
  padding: 0;
}

.t-ico svg {
  width: 22px;
  height: 22px;
}

/* status bar */
.statusbar {
  height: 25px;
  flex: none;
  display: flex;
  align-items: center;
  background: #ededed;
  font-size: 14px;
  color: #333;
}

.st-marks {
  width: 84px;
  padding-left: 4px;
}

.st-dim {
  width: 132px;
}

.st-sum {
  width: 1246px;
}

.st-cells {
  flex: 1;
  height: 100%;
  display: flex;
}

.st-cells > * {
  height: 100%;
  border-left: 1px solid #d6d6d6;
}

.w159 { width: 159px; }
.w34 { width: 34px; }
.w58 { width: 58px; }

.st-nav {
  width: 89px;
  display: flex;
  align-items: center;
  justify-content: center;
  gap: 12px;
}

.st-nav svg {
  width: 7px;
  height: 9px;
}

.st-layout {
  flex: 1;
  display: flex;
  align-items: center;
  gap: 6px;
  padding-left: 11px;
}

.st-layout svg {
  width: 14px;
  height: 14px;
}

/* windows taskbar */
.taskbar {
  flex: 1;
  display: flex;
  align-items: center;
  background: linear-gradient(90deg, #cfe6ef, #d3dfee);
  color: #111;
}

.start {
  width: 61px;
  display: flex;
  justify-content: center;
}

.start svg {
  width: 20px;
  height: 20px;
  margin-left: -1px;
}

.task-search {
  width: 429px;
  height: 49px;
  background: #fff;
  border: 1px solid #bbb;
  border-width: 1px 1px 0 0;
  display: flex;
  align-items: center;
  gap: 14px;
  padding-left: 15px;
}

.task-search svg {
  width: 20px;
  height: 20px;
}

.task-search span {
  font-size: 19px;
  color: #222;
}

.task-apps {
  height: 100%;
  display: grid;
  grid-template-columns: 58px 62px 66px 58px 66px 60px;
}

.task-app {
  display: flex;
  align-items: center;
  justify-content: center;
}

.task-app svg {
  width: 22px;
  height: 22px;
}

.task-app.big svg {
  width: 30px;
  height: 30px;
}

.task-app.tableau {
  background: #e6f0f5;
  border-bottom: 4px solid #0a6cc4;
}

.task-app.tableau svg {
  width: 26px;
  height: 26px;
}

.tray {
  margin-left: auto;
  display: flex;
  align-items: center;
  padding-right: 30px;
}

.weather {
  width: 26px;
  height: 30px;
  margin-right: 13px;
}

.temp {
  font-size: 17px;
  margin-right: 11px;
}

.haze {
  font-size: 17px;
  margin-right: 21px;
}

.tray-ico {
  width: 20px;
  height: 20px;
  margin-right: 9px;
}

.tray-ico.chev {
  width: 16px;
  height: 10px;
  margin-right: 15px;
}

.lang {
  font-size: 14.5px;
  margin: 0 14px 0 4px;
}

.clock {
  display: flex;
  flex-direction: column;
  align-items: center;
  gap: 4px;
  font-size: 15.5px;
  margin-right: 25px;
}

.tray-ico.notif {
  margin: 0;
}
```
